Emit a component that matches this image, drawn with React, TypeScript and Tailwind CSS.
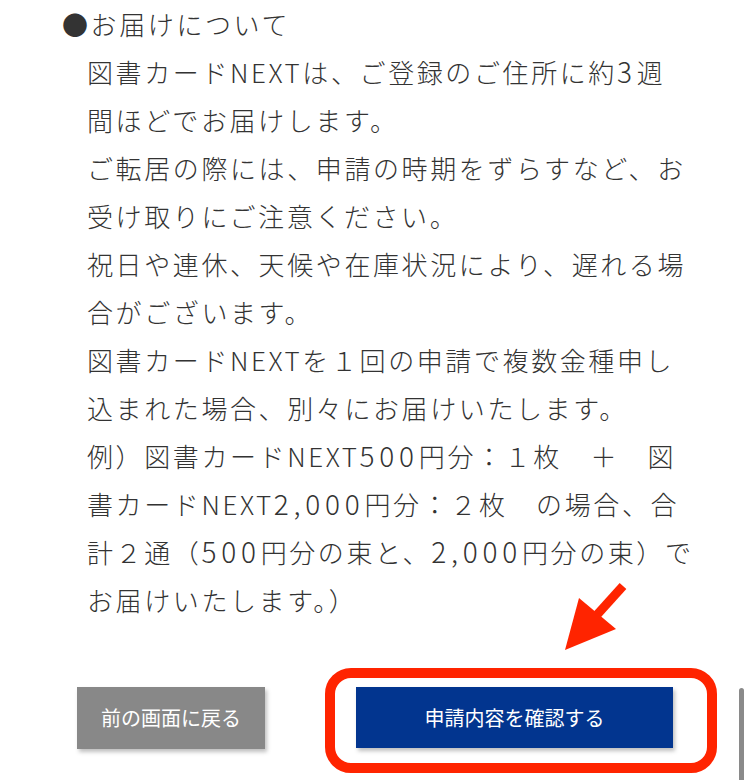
import React from "react";

const N = ({ children }: { children: React.ReactNode }) => (
  <span className="text-[28px] leading-none tracking-[0.17em]">{children}</span>
);

export default function App() {
  const lines: React.ReactNode[] = [
    <>図書カードNEXTは、ご登録のご住所に約<N>3</N>週</>,
    "間ほどでお届けします。",
    "ご転居の際には、申請の時期をずらすなど、お",
    "受け取りにご注意ください。",
    "祝日や連休、天候や在庫状況により、遅れる場",
    "合がございます。",
    "図書カードNEXTを１回の申請で複数金種申し",
    "込まれた場合、別々にお届けいたします。",
    <>例）図書カードNEXT<N>500</N>円分：１枚　＋　図</>,
    <>書カードNEXT<N>2,000</N>円分：２枚　の場合、合</>,
    <>計２通（<N>500</N>円分の束と、<N>2,000</N>円分の束）で</>,
    "お届けいたします。）",
  ];
  return (
    <div
      className="relative w-[750px] h-[780px] overflow-hidden bg-white text-[#333333]"
      style={{ fontFamily: '"Noto Sans CJK JP", "Noto Sans", sans-serif' }}
    >
      <div className="pl-[62px] pt-0 text-[26px] font-light leading-[48px] tracking-[0.1em] whitespace-pre">
        <div className="h-[48px]">●お届けについて</div>
        <div className="pl-[25px]">
          {lines.map((l, i) => (
            <div key={i} className="h-[48px]">
              {l}
            </div>
          ))}
        </div>
      </div>

      <div className="flex items-start pl-[77px] pt-[63px] gap-[91px]">
        <button className="w-[188px] h-[62px] bg-[#888888] text-white text-[20px] shadow-[2px_3px_4px_rgba(0,0,0,0.25)] flex items-center justify-center">
          前の画面に戻る
        </button>
        <button className="w-[317px] h-[61px] bg-[#02358f] text-white text-[20px] shadow-[2px_3px_4px_rgba(0,0,0,0.25)] flex items-center justify-center">
          申請内容を確認する
        </button>
      </div>

      {/* annotation: red rounded frame */}
      <div className="absolute left-[325px] top-[668px] w-[392px] h-[105px] rounded-[26px] border-[10px] border-[#ff2400]" />

      {/* annotation: red arrow */}
      <svg
        className="absolute left-[550px] top-[575px]"
        width="90"
        height="85"
        viewBox="0 0 90 85"
      >
        <line x1="73" y1="11" x2="45" y2="42" stroke="#ff2400" strokeWidth="9" />
        <polygon points="15,75 29,23 66,54" fill="#ff2400" />
      </svg>

      {/* scrollbar */}
      <div className="absolute left-[739px] top-[688px] w-[5px] h-[100px] rounded-full bg-[#8a8a8a]" />
    </div>
  );
}
